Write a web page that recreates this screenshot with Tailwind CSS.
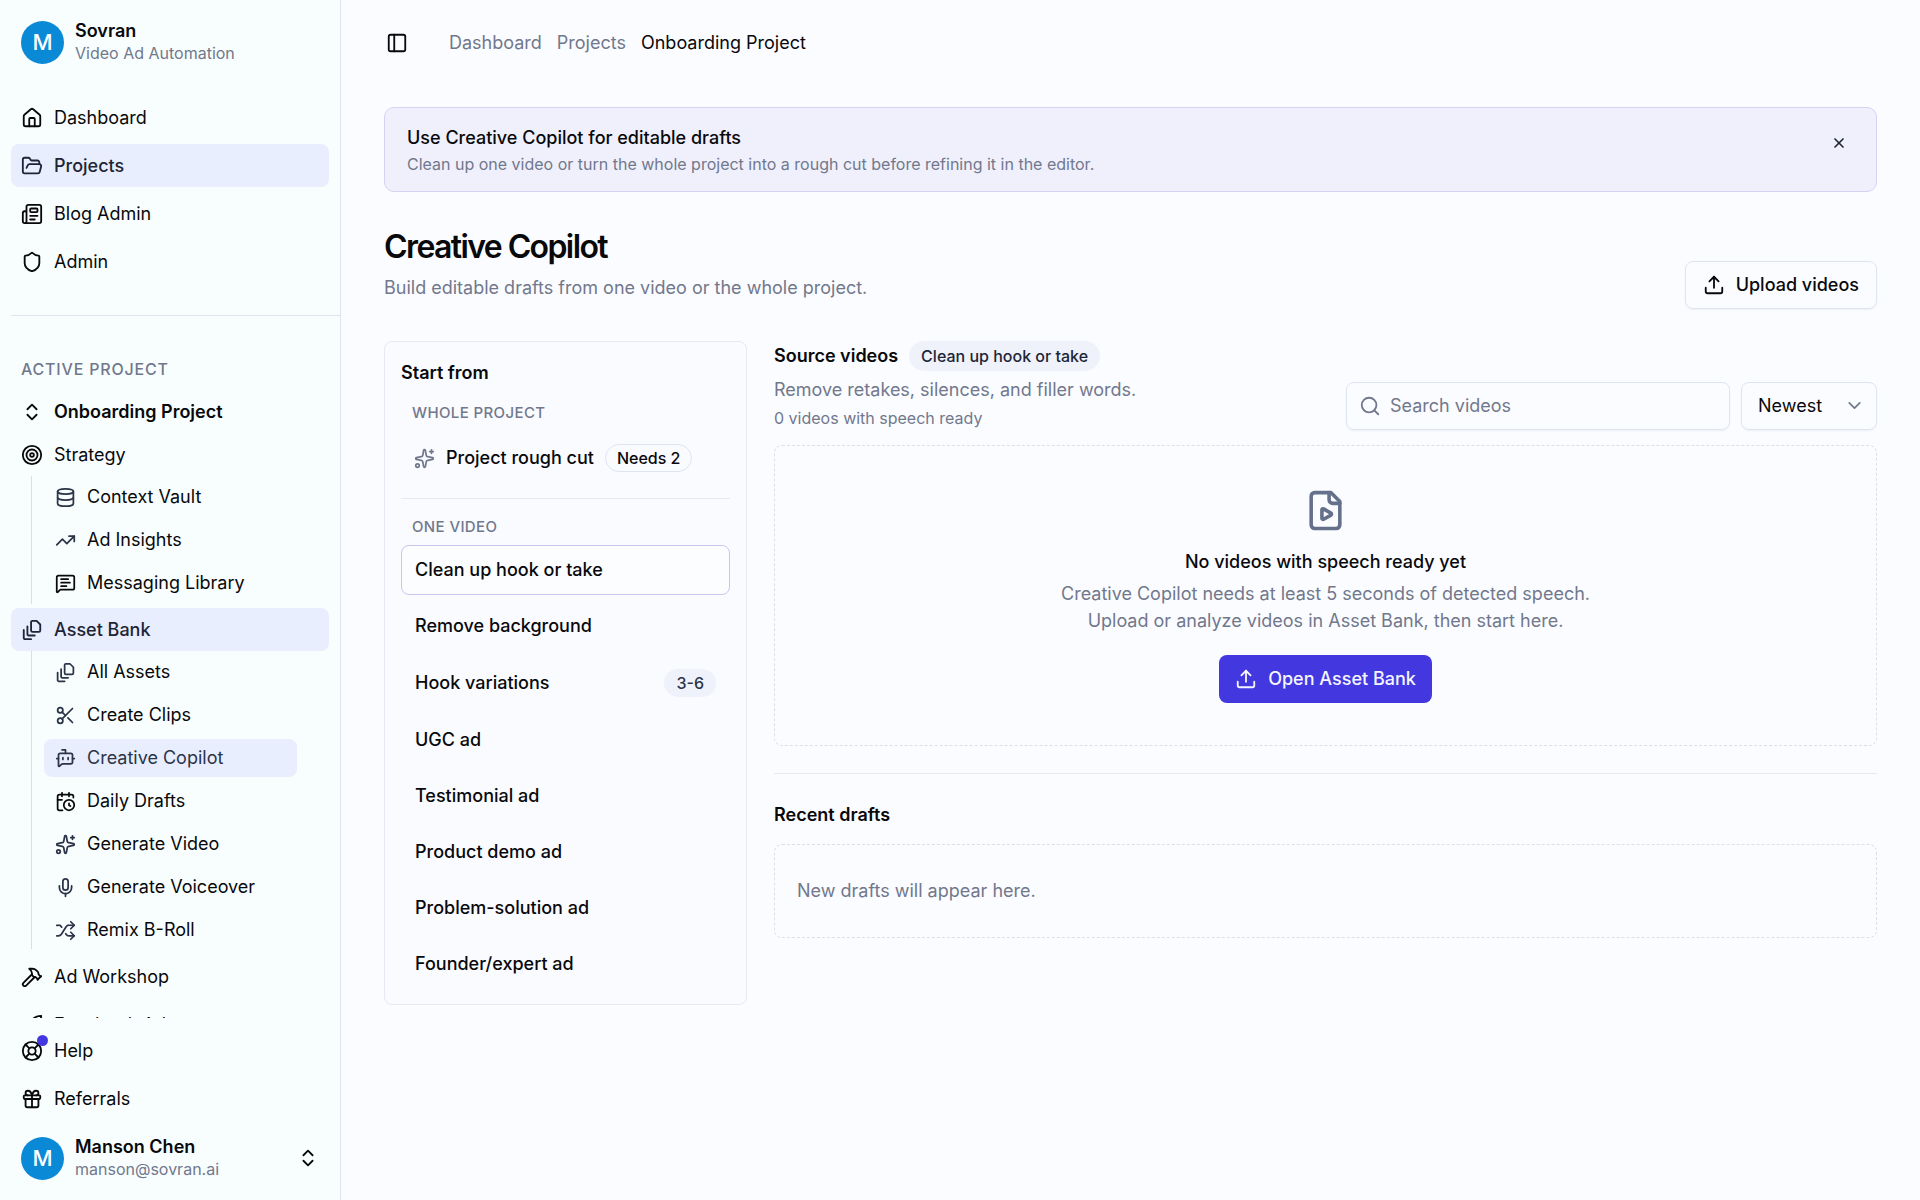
<!DOCTYPE html>
<html lang="en">
  <head>
    <meta charset="UTF-8" />
    <meta name="viewport" content="width=device-width, initial-scale=1.0" />
    <title>Creative Copilot - Sovran</title>
    <script src="https://cdn.jsdelivr.net/npm/@tailwindcss/browser@4"></script>
  </head>
  <body class="bg-[#fbfcff] text-[#09090b] font-[Inter,sans-serif] text-[18px] leading-[26px]">
    <!-- icon sprite -->
    <svg class="hidden">
      <symbol id="house" viewBox="0 0 24 24"><path d="M15 21v-8a1 1 0 0 0-1-1h-4a1 1 0 0 0-1 1v8" /><path d="M3 10a2 2 0 0 1 .709-1.528l7-5.999a2 2 0 0 1 2.582 0l7 5.999A2 2 0 0 1 21 10v9a2 2 0 0 1-2 2H5a2 2 0 0 1-2-2z" /></symbol>
      <symbol id="folder" viewBox="0 0 24 24"><path d="m6 14 1.5-2.9A2 2 0 0 1 9.24 10H20a2 2 0 0 1 1.94 2.5l-1.54 6a2 2 0 0 1-1.95 1.5H4a2 2 0 0 1-2-2V5a2 2 0 0 1 2-2h3.9a2 2 0 0 1 1.69.9l.81 1.2a2 2 0 0 0 1.67.9H18a2 2 0 0 1 2 2v2" /></symbol>
      <symbol id="newspaper" viewBox="0 0 24 24"><path d="M15 18h-5" /><path d="M18 14h-8" /><path d="M4 22h16a2 2 0 0 0 2-2V4a2 2 0 0 0-2-2H8a2 2 0 0 0-2 2v16a2 2 0 0 1-4 0v-9a2 2 0 0 1 2-2h2" /><rect width="8" height="4" x="10" y="6" rx="1" /></symbol>
      <symbol id="shield" viewBox="0 0 24 24"><path d="M20 13c0 5-3.5 7.5-7.66 8.95a1 1 0 0 1-.67-.01C7.5 20.5 4 18 4 13V6a1 1 0 0 1 1-1c2 0 4.5-1.2 6.24-2.72a1.17 1.17 0 0 1 1.52 0C14.51 3.81 17 5 19 5a1 1 0 0 1 1 1z" /></symbol>
      <symbol id="updown" viewBox="0 0 24 24"><path d="m7 15 5 5 5-5" /><path d="m7 9 5-5 5 5" /></symbol>
      <symbol id="target" viewBox="0 0 24 24"><circle cx="12" cy="12" r="10" /><circle cx="12" cy="12" r="6" /><circle cx="12" cy="12" r="2" /></symbol>
      <symbol id="database" viewBox="0 0 24 24"><ellipse cx="12" cy="5" rx="9" ry="3" /><path d="M3 5V19A9 3 0 0 0 21 19V5" /><path d="M3 12A9 3 0 0 0 21 12" /></symbol>
      <symbol id="trending" viewBox="0 0 24 24"><path d="M16 7h6v6" /><path d="m22 7-8.5 8.5-5-5L2 17" /></symbol>
      <symbol id="message" viewBox="0 0 24 24"><path d="M22 17a2 2 0 0 1-2 2H6.828a2 2 0 0 0-1.414.586l-2.202 2.202A.71.71 0 0 1 2 21.286V5a2 2 0 0 1 2-2h16a2 2 0 0 1 2 2z" /><path d="M7 11h10" /><path d="M7 15h6" /><path d="M7 7h8" /></symbol>
      <symbol id="stack" viewBox="0 0 24 24"><path d="M21 6v6.5c0 .8-.7 1.5-1.5 1.5h-7c-.8 0-1.5-.7-1.5-1.5v-9c0-.8.7-1.5 1.5-1.5H17Z" /><path d="M7 8v8.8c0 .3.2.6.4.8.2.2.5.4.8.4H15" /><path d="M3 12v8.8c0 .3.2.6.4.8.2.2.5.4.8.4H11" /></symbol>
      <symbol id="scissors" viewBox="0 0 24 24"><circle cx="6" cy="6" r="3" /><path d="M8.12 8.12 12 12" /><path d="M20 4 8.12 15.88" /><circle cx="6" cy="18" r="3" /><path d="M14.8 14.8 20 20" /></symbol>
      <symbol id="bot" viewBox="0 0 24 24"><path d="M12 6V2H8" /><path d="M15 11v2" /><path d="M2 12h2" /><path d="M20 12h2" /><path d="M20 16a2 2 0 0 1-2 2H8.828a2 2 0 0 0-1.414.586l-2.202 2.202A.71.71 0 0 1 4 20.286V8a2 2 0 0 1 2-2h12a2 2 0 0 1 2 2z" /><path d="M9 11v2" /></symbol>
      <symbol id="calendar" viewBox="0 0 24 24"><path d="M16 14v2.2l1.6 1" /><path d="M16 2v4" /><path d="M21 7.5V6a2 2 0 0 0-2-2H5a2 2 0 0 0-2 2v14a2 2 0 0 0 2 2h3.5" /><path d="M3 10h5" /><path d="M8 2v4" /><circle cx="16" cy="16" r="6" /></symbol>
      <symbol id="sparkles" viewBox="0 0 24 24"><path d="M11.017 2.814a1 1 0 0 1 1.966 0l1.051 5.558a2 2 0 0 0 1.594 1.594l5.558 1.051a1 1 0 0 1 0 1.966l-5.558 1.051a2 2 0 0 0-1.594 1.594l-1.051 5.558a1 1 0 0 1-1.966 0l-1.051-5.558a2 2 0 0 0-1.594-1.594l-5.558-1.051a1 1 0 0 1 0-1.966l5.558-1.051a2 2 0 0 0 1.594-1.594z" /><path d="M20 2v4" /><path d="M22 4h-4" /><circle cx="4" cy="20" r="2" /></symbol>
      <symbol id="mic" viewBox="0 0 24 24"><path d="M12 19v3" /><path d="M19 10v2a7 7 0 0 1-14 0v-2" /><rect x="9" y="2" width="6" height="13" rx="3" /></symbol>
      <symbol id="shuffle" viewBox="0 0 24 24"><path d="m18 14 4 4-4 4" /><path d="m18 2 4 4-4 4" /><path d="M2 18h1.973a4 4 0 0 0 3.3-1.7l5.454-8.6a4 4 0 0 1 3.3-1.7H22" /><path d="M2 6h1.972a4 4 0 0 1 3.6 2.2" /><path d="M22 18h-6.041a4 4 0 0 1-3.3-1.8l-.359-.45" /></symbol>
      <symbol id="hammer" viewBox="0 0 24 24"><path d="m15 12-9.373 9.373a1 1 0 0 1-3.001-3L12 9" /><path d="m18 15 4-4" /><path d="m21.5 11.5-1.914-1.914A2 2 0 0 1 19 8.172v-.344a2 2 0 0 0-.586-1.414l-1.657-1.657A6 6 0 0 0 12.516 3H9l1.243 1.243A6 6 0 0 1 12 8.485V10l2 2h1.172a2 2 0 0 1 1.414.586L18.5 14.5" /></symbol>
      <symbol id="rocket" viewBox="0 0 24 24"><path d="M4.5 16.5c-1.5 1.26-2 5-2 5s3.74-.5 5-2c.71-.84.7-2.13-.09-2.91a2.18 2.18 0 0 0-2.91-.09z" /><path d="m12 15-3-3a22 22 0 0 1 2-3.95A12.88 12.88 0 0 1 22 2c0 2.72-.78 7.5-6 11a22.35 22.35 0 0 1-4 2z" /></symbol>
      <symbol id="buoy" viewBox="0 0 24 24"><circle cx="12" cy="12" r="10" /><path d="m4.93 4.93 4.24 4.24" /><path d="m14.83 9.17 4.24-4.24" /><path d="m14.83 14.83 4.24 4.24" /><path d="m9.17 14.83-4.24 4.24" /><circle cx="12" cy="12" r="4" /></symbol>
      <symbol id="gift" viewBox="0 0 24 24"><rect x="3" y="8" width="18" height="4" rx="1" /><path d="M12 8v13" /><path d="M19 12v7a2 2 0 0 1-2 2H7a2 2 0 0 1-2-2v-7" /><path d="M7.5 8a2.5 2.5 0 0 1 0-5A4.8 8 0 0 1 12 8a4.8 8 0 0 1 4.5-5 2.5 2.5 0 0 1 0 5" /></symbol>
      <symbol id="panel" viewBox="0 0 24 24"><rect width="18" height="18" x="3" y="3" rx="2" /><path d="M9 3v18" /></symbol>
      <symbol id="close" viewBox="0 0 24 24"><path d="M18 6 6 18" /><path d="m6 6 12 12" /></symbol>
      <symbol id="upload" viewBox="0 0 24 24"><path d="M12 3v12" /><path d="m17 8-5-5-5 5" /><path d="M21 15v4a2 2 0 0 1-2 2H5a2 2 0 0 1-2-2v-4" /></symbol>
      <symbol id="search" viewBox="0 0 24 24"><circle cx="11" cy="11" r="8" /><path d="m21 21-4.3-4.3" /></symbol>
      <symbol id="chevron" viewBox="0 0 24 24"><path d="m6 9 6 6 6-6" /></symbol>
      <symbol id="file-play" viewBox="0 0 24 24"><path d="M15 2H6a2 2 0 0 0-2 2v16a2 2 0 0 0 2 2h12a2 2 0 0 0 2-2V7Z" /><path d="M14 2v4a2 2 0 0 0 2 2h4" /><path d="M15.033 13.44a.647.647 0 0 1 0 1.12l-4.065 2.352a.645.645 0 0 1-.968-.56v-4.704a.645.645 0 0 1 .967-.56z" /></symbol>
    </svg>

    <div class="flex h-screen">
      <!-- Sidebar -->
      <aside class="flex w-[341px] shrink-0 flex-col border-r border-[#dfe5f0] bg-[#f8fefe]">
        <div class="flex items-center gap-[11px] px-[21px] pt-5">
          <div class="flex size-[43px] shrink-0 items-center justify-center rounded-full bg-[#0a8ad6] text-[22px] font-medium text-white">M</div>
          <div>
            <div class="font-semibold leading-[22px]">Sovran</div>
            <div class="text-[16px] leading-[22px] text-[#71788c]">Video Ad Automation</div>
          </div>
        </div>

        <nav class="min-h-0 flex-1 overflow-hidden pt-8">
          <ul class="flex flex-col gap-[5px] px-[11px]">
            <li><a href="#" class="flex h-[43px] items-center gap-[11px] rounded-lg px-[10px]"><svg class="size-[22px] fill-none stroke-current stroke-2" stroke-linecap="round" stroke-linejoin="round"><use href="#house" /></svg>Dashboard</a></li>
            <li><a href="#" class="flex h-[43px] items-center gap-[11px] rounded-lg bg-[#e8eefd] px-[10px] font-medium text-[#1d2536]"><svg class="size-[22px] fill-none stroke-current stroke-2" stroke-linecap="round" stroke-linejoin="round"><use href="#folder" /></svg>Projects</a></li>
            <li><a href="#" class="flex h-[43px] items-center gap-[11px] rounded-lg px-[10px]"><svg class="size-[22px] fill-none stroke-current stroke-2" stroke-linecap="round" stroke-linejoin="round"><use href="#newspaper" /></svg>Blog Admin</a></li>
            <li><a href="#" class="flex h-[43px] items-center gap-[11px] rounded-lg px-[10px]"><svg class="size-[22px] fill-none stroke-current stroke-2" stroke-linecap="round" stroke-linejoin="round"><use href="#shield" /></svg>Admin</a></li>
          </ul>

          <hr class="mt-8 ml-[11px] border-[#dfe5f0]" />

          <div class="px-[11px] pt-[32px]">
            <h2 class="px-[10px] py-2 text-[16px] leading-[26px] font-medium tracking-wider text-[#71788c]">ACTIVE PROJECT</h2>
            <button class="flex h-[43px] w-full items-center gap-[11px] px-[10px] font-semibold"><svg class="size-[22px] fill-none stroke-current stroke-2" stroke-linecap="round" stroke-linejoin="round"><use href="#updown" /></svg>Onboarding Project</button>
            <a href="#" class="flex h-[43px] items-center gap-[11px] px-[10px]"><svg class="size-[22px] fill-none stroke-current stroke-2" stroke-linecap="round" stroke-linejoin="round"><use href="#target" /></svg>Strategy</a>
            <ul class="ml-5 flex flex-col gap-[5px] border-l border-[#d8dfec] py-[2px] pl-3">
              <li><a href="#" class="flex h-[38px] items-center gap-[11px] px-[11px]"><svg class="size-[21px] fill-none stroke-[#2b3448] stroke-2" stroke-linecap="round" stroke-linejoin="round"><use href="#database" /></svg>Context Vault</a></li>
              <li><a href="#" class="flex h-[38px] items-center gap-[11px] px-[11px]"><svg class="size-[21px] fill-none stroke-[#2b3448] stroke-2" stroke-linecap="round" stroke-linejoin="round"><use href="#trending" /></svg>Ad Insights</a></li>
              <li><a href="#" class="flex h-[38px] items-center gap-[11px] px-[11px]"><svg class="size-[21px] fill-none stroke-current stroke-2" stroke-linecap="round" stroke-linejoin="round"><use href="#message" /></svg>Messaging Library</a></li>
            </ul>
            <a href="#" class="mt-1 flex h-[43px] items-center gap-[11px] rounded-lg bg-[#e8eefd] px-[10px] font-medium text-[#1d2536]"><svg class="size-[22px] fill-none stroke-current stroke-2" stroke-linecap="round" stroke-linejoin="round"><use href="#stack" /></svg>Asset Bank</a>
            <ul class="mr-8 ml-5 flex flex-col gap-[5px] border-l border-[#d8dfec] pt-[2px] pl-3">
              <li><a href="#" class="flex h-[38px] items-center gap-[11px] px-[11px]"><svg class="size-[21px] fill-none stroke-[#2b3448] stroke-2" stroke-linecap="round" stroke-linejoin="round"><use href="#stack" /></svg>All Assets</a></li>
              <li><a href="#" class="flex h-[38px] items-center gap-[11px] px-[11px]"><svg class="size-[21px] fill-none stroke-[#2b3448] stroke-2" stroke-linecap="round" stroke-linejoin="round"><use href="#scissors" /></svg>Create Clips</a></li>
              <li><a href="#" class="flex h-[38px] items-center gap-[11px] rounded-lg bg-[#e8eefd] px-[11px] text-[#2b3448]"><svg class="size-[21px] fill-none stroke-current stroke-2" stroke-linecap="round" stroke-linejoin="round"><use href="#bot" /></svg>Creative Copilot</a></li>
              <li><a href="#" class="flex h-[38px] items-center gap-[11px] px-[11px]"><svg class="size-[21px] fill-none stroke-current stroke-2" stroke-linecap="round" stroke-linejoin="round"><use href="#calendar" /></svg>Daily Drafts</a></li>
              <li><a href="#" class="flex h-[38px] items-center gap-[11px] px-[11px]"><svg class="size-[21px] fill-none stroke-[#2b3448] stroke-2" stroke-linecap="round" stroke-linejoin="round"><use href="#sparkles" /></svg>Generate Video</a></li>
              <li><a href="#" class="flex h-[38px] items-center gap-[11px] px-[11px]"><svg class="size-[21px] fill-none stroke-[#2b3448] stroke-2" stroke-linecap="round" stroke-linejoin="round"><use href="#mic" /></svg>Generate Voiceover</a></li>
              <li><a href="#" class="flex h-[38px] items-center gap-[11px] px-[11px]"><svg class="size-[21px] fill-none stroke-[#2b3448] stroke-2" stroke-linecap="round" stroke-linejoin="round"><use href="#shuffle" /></svg>Remix B-Roll</a></li>
            </ul>
            <div class="flex flex-col gap-[5px] pt-[6px]">
              <a href="#" class="flex h-[43px] items-center gap-[11px] px-[10px]"><svg class="size-[22px] fill-none stroke-current stroke-2" stroke-linecap="round" stroke-linejoin="round"><use href="#hammer" /></svg>Ad Workshop</a>
              <a href="#" class="flex h-[43px] items-center gap-[11px] px-[10px]"><svg class="size-[22px] fill-none stroke-current stroke-2" stroke-linecap="round" stroke-linejoin="round"><use href="#rocket" /></svg>Facebook Ads</a>
            </div>
          </div>
        </nav>

        <div class="px-[11px] pt-[11px] pb-5">
          <a href="#" class="flex h-[43px] items-center gap-[11px] px-[10px]">
            <span class="relative">
              <svg class="size-[22px] fill-none stroke-current stroke-2" stroke-linecap="round" stroke-linejoin="round"><use href="#buoy" /></svg>
              <span class="absolute -top-[5px] -right-[5px] size-[11px] rounded-full bg-[#4338e0]"></span>
            </span>
            Help
          </a>
          <a href="#" class="mt-[5px] flex h-[43px] items-center gap-[11px] px-[10px]"><svg class="size-[22px] fill-none stroke-current stroke-2" stroke-linecap="round" stroke-linejoin="round"><use href="#gift" /></svg>Referrals</a>
          <button class="mt-4 flex w-full items-center gap-[11px] px-[10px] text-left">
            <span class="flex size-[43px] shrink-0 items-center justify-center rounded-full bg-[#0a8ad6] text-[22px] font-medium text-white">M</span>
            <span class="flex-1">
              <span class="block font-semibold leading-[22px]">Manson Chen</span>
              <span class="block text-[16px] leading-[22px] text-[#71788c]">manson@sovran.ai</span>
            </span>
            <svg class="size-[22px] fill-none stroke-current stroke-2" stroke-linecap="round" stroke-linejoin="round"><use href="#updown" /></svg>
          </button>
        </div>
      </aside>

      <!-- Main -->
      <main class="min-w-0 flex-1 px-[43px]">
        <header class="flex h-[86px] items-center gap-[41px]">
          <button aria-label="Toggle sidebar" class="pl-[2px]"><svg class="size-[22px] fill-none stroke-current stroke-2" stroke-linecap="round" stroke-linejoin="round"><use href="#panel" /></svg></button>
          <nav class="flex gap-[15px] text-[#71788c]">
            <a href="#">Dashboard</a>
            <a href="#">Projects</a>
            <span class="text-[#09090b]">Onboarding Project</span>
          </nav>
        </header>

        <section class="mt-[21px] flex items-start justify-between rounded-[10px] border border-[#d3d4f3] bg-[#eff0fc] px-[22px] pt-[17px] pb-[14px]">
          <div>
            <h2 class="font-medium">Use Creative Copilot for editable drafts</h2>
            <p class="text-[16px] text-[#71788c]">Clean up one video or turn the whole project into a rough cut before refining it in the editor.</p>
          </div>
          <button aria-label="Dismiss" class="mt-[10px] mr-[7px]"><svg class="size-4 fill-none stroke-[#1d2536] stroke-[2.5]" stroke-linecap="round" stroke-linejoin="round"><use href="#close" /></svg></button>
        </section>

        <div class="mt-[33px] flex items-end justify-between">
          <div class="pb-2">
            <h1 class="text-[32px] leading-[44px] font-semibold tracking-tighter">Creative Copilot</h1>
            <p class="mt-[6px] text-[#71788c]">Build editable drafts from one video or the whole project.</p>
          </div>
          <button class="flex h-12 items-center gap-[11px] rounded-lg border border-[#dfe5f0] px-[17px] font-medium shadow-xs"><svg class="size-[22px] fill-none stroke-current stroke-2" stroke-linecap="round" stroke-linejoin="round"><use href="#upload" /></svg>Upload videos</button>
        </div>

        <div class="mt-8 flex items-start gap-[27px]">
          <!-- Workflow picker -->
          <section class="w-[363px] shrink-0 rounded-lg border border-[#e6e9f2] bg-[#fafbff] px-4 pt-[18px] pb-[15px]">
            <h2 class="font-semibold">Start from</h2>
            <h3 class="mt-[15px] px-[11px] text-[15px] leading-[24px] font-medium tracking-wide text-[#71788c]">WHOLE PROJECT</h3>
            <button class="mt-2 flex h-[50px] w-full items-center gap-[11px] px-[13px] font-medium">
              <svg class="size-[21px] fill-none stroke-[#71788c] stroke-2" stroke-linecap="round" stroke-linejoin="round"><use href="#sparkles" /></svg>
              Project rough cut
              <span class="rounded-full border border-[#dfe5f0] px-[11px] text-[16px]">Needs 2</span>
            </button>
            <hr class="mt-[15px] border-[#e6e9f2]" />
            <h3 class="mt-4 px-[11px] text-[15px] leading-[24px] font-medium tracking-wide text-[#71788c]">ONE VIDEO</h3>
            <ul class="mt-[6px] flex flex-col gap-[6px]">
              <li><button class="flex h-[50px] w-full items-center rounded-lg border border-[#c9c5ee] bg-[#fcfdff] px-[13px] font-medium">Clean up hook or take</button></li>
              <li><button class="flex h-[50px] w-full items-center px-[14px] font-medium">Remove background</button></li>
              <li><button class="flex h-[52px] w-full items-center justify-between px-[14px] font-medium">Hook variations <span class="rounded-full bg-[#eff2fb] px-3 py-px text-[16px] text-[#2b3448]">3-6</span></button></li>
              <li><button class="flex h-[50px] w-full items-center px-[14px] font-medium">UGC ad</button></li>
              <li><button class="flex h-[50px] w-full items-center px-[14px] font-medium">Testimonial ad</button></li>
              <li><button class="flex h-[50px] w-full items-center px-[14px] font-medium">Product demo ad</button></li>
              <li><button class="flex h-[50px] w-full items-center px-[14px] font-medium">Problem-solution ad</button></li>
              <li><button class="flex h-[50px] w-full items-center px-[14px] font-medium">Founder/expert ad</button></li>
            </ul>
          </section>

          <!-- Source videos -->
          <div class="min-w-0 flex-1">
            <div class="flex items-end justify-between">
              <div>
                <div class="flex items-center gap-[11px]">
                  <h2 class="font-semibold">Source videos</h2>
                  <span class="rounded-full bg-[#eff2fb] px-3 py-[2px] text-[16px] font-medium text-[#1d2536]">Clean up hook or take</span>
                </div>
                <p class="mt-[6px] text-[#71788c]">Remove retakes, silences, and filler words.</p>
                <p class="mt-[3px] text-[16px] leading-[24px] text-[#71788c]">0 videos with speech ready</p>
              </div>
              <div class="flex gap-[11px]">
                <label class="flex h-12 w-[384px] items-center gap-[9px] rounded-lg border border-[#dfe5f0] px-3 shadow-xs">
                  <svg class="size-[22px] shrink-0 fill-none stroke-[#71788c] stroke-2" stroke-linecap="round" stroke-linejoin="round"><use href="#search" /></svg>
                  <input type="search" aria-label="Search videos" placeholder="Search videos" class="min-w-0 flex-1 outline-none placeholder:text-[#71788c]" />
                </label>
                <div class="relative">
                  <select aria-label="Sort" class="h-12 w-[136px] appearance-none rounded-lg border border-[#dfe5f0] px-4 shadow-xs">
                    <option>Newest</option>
                    <option>Oldest</option>
                  </select>
                  <svg class="pointer-events-none absolute top-[13px] right-[12px] size-[21px] fill-none stroke-[#71788c] stroke-2" stroke-linecap="round" stroke-linejoin="round"><use href="#chevron" /></svg>
                </div>
              </div>
            </div>

            <div class="mt-[15px] flex flex-col items-center rounded-lg border border-dashed border-[#dcdfe6] pt-[43px] pb-[42px] text-center">
              <svg class="size-[43px] fill-none stroke-[#65708a] stroke-2" stroke-linecap="round" stroke-linejoin="round"><use href="#file-play" /></svg>
              <h3 class="mt-[17px] font-medium">No videos with speech ready yet</h3>
              <p class="mt-[5px] max-w-[560px] leading-[27px] text-[#71788c]">Creative Copilot needs at least 5 seconds of detected speech. Upload or analyze videos in Asset Bank, then start here.</p>
              <button class="mt-[21px] flex h-12 items-center gap-[11px] rounded-lg bg-[#4338e0] px-4 font-medium text-[#f4f5ff]"><svg class="size-[22px] fill-none stroke-current stroke-2" stroke-linecap="round" stroke-linejoin="round"><use href="#upload" /></svg>Open Asset Bank</button>
            </div>

            <section class="mt-[27px] border-t border-[#e6e9ee] pt-[28px]">
              <h2 class="font-semibold">Recent drafts</h2>
              <div class="mt-4 rounded-lg border border-dashed border-[#dcdfe6] px-[22px] py-[33px] text-[#71788c]">New drafts will appear here.</div>
            </section>
          </div>
        </div>
      </main>
    </div>
  </body>
</html>
